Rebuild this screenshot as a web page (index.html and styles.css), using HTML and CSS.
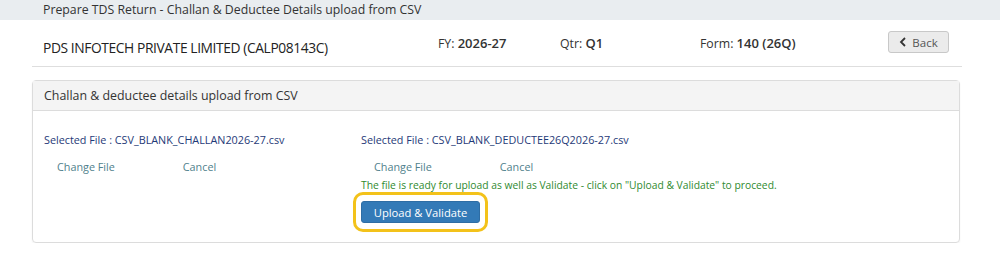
FILE: index.html
```html
<!DOCTYPE html>
<html lang="en">
<head>
  <meta charset="UTF-8">
  <title>Prepare TDS Return - CSV Upload</title>
  <link rel="stylesheet" href="styles.css">
</head>
<body>

  <div class="topbar">Prepare TDS Return - Challan &amp; Deductee Details upload from CSV</div>

  <div class="header">
    <div class="company">PDS INFOTECH PRIVATE LIMITED (CALP08143C)</div>
    <div class="fy">FY: <b>2026-27</b></div>
    <div class="qtr">Qtr: <b>Q1</b></div>
    <div class="form">Form: <b>140 (26Q)</b></div>
    <button class="back-btn">
      <svg width="8" height="10" viewBox="0 0 8 10"><path d="M6 1 L2 5 L6 9" fill="none" stroke="#333" stroke-width="1.8"/></svg>
      Back
    </button>
  </div>

  <div class="panel">
    <div class="panel-heading">Challan &amp; deductee details upload from CSV</div>
    <div class="panel-body">
      <div class="col col-challan">
        <div class="selected">Selected File : CSV_BLANK_CHALLAN2026-27.csv</div>
        <div class="links">
          <a href="#" class="change">Change File</a>
          <a href="#">Cancel</a>
        </div>
      </div>
      <div class="col col-deductee">
        <div class="selected">Selected File : CSV_BLANK_DEDUCTEE26Q2026-27.csv</div>
        <div class="links">
          <a href="#" class="change">Change File</a>
          <a href="#">Cancel</a>
        </div>
        <div class="ready">The file is ready for upload as well as Validate - click on "Upload &amp; Validate" to proceed.</div>
        <div class="highlight">
          <button class="upload-btn">Upload &amp; Validate</button>
        </div>
      </div>
    </div>
  </div>

</body>
</html>
```

FILE: styles.css
```css
body {
  font-family: "Open Sans", "Noto Sans", Arial, sans-serif;
  background-color: #fff;
  color: #333;
  margin: 0;
  padding: 0;
}

.topbar {
  height: 20px;
  line-height: 19px;
  background-color: #e9edf0;
  padding-left: 43px;
  font-size: 12.3px;
  color: #333;
}

.header {
  display: flex;
  align-items: center;
  height: 46px;
  margin: 0 38px 0 32px;
  padding-left: 11px;
  border-bottom: 1px solid #dedede;
  font-size: 12.3px;
  color: #333;
}

.header b {
  font-weight: 600;
  font-size: 13px;
}

.company {
  width: 395px;
  font-size: 13.8px;
  letter-spacing: -0.4px;
  color: #222;
  padding-top: 8px;
}

.fy {
  width: 122px;
}

.qtr {
  width: 140px;
}

.form {
  flex: 1;
}

.back-btn {
  width: 61px;
  height: 22px;
  margin-right: 13px;
  margin-top: -2px;
  border: 1px solid #c8c8c8;
  border-radius: 3px;
  background-color: #ebebeb;
  font-family: inherit;
  font-size: 11.5px;
  color: #555;
  display: flex;
  align-items: center;
  justify-content: center;
  gap: 5px;
  padding: 0;
}

.panel {
  margin: 13px 40px 0 32px;
  border: 1px solid #dcdcdc;
  border-radius: 4px;
  box-shadow: 0 1px 2px rgba(0, 0, 0, 0.05);
}

.panel-heading {
  height: 29px;
  line-height: 29px;
  padding-left: 11px;
  background-color: #f4f4f4;
  border-bottom: 1px solid #dcdcdc;
  font-size: 12.4px;
  color: #333;
}

.panel-body {
  display: flex;
  padding: 21px 11px 10px 11px;
}

.col-challan {
  width: 317px;
}

.selected {
  font-size: 10.8px;
  color: #1f3a78;
  height: 17px;
}

.links {
  margin-top: 10px;
  padding-left: 13px;
  font-size: 10.8px;
  height: 16px;
}

.links a {
  color: #4f7f8c;
  text-decoration: none;
}

.links .change {
  display: inline-block;
  width: 123px;
}

.ready {
  margin-top: 3px;
  font-size: 10.3px;
  color: #2f8a2f;
}

.highlight {
  display: inline-block;
  margin: 0 0 0 -8px;
  padding: 6px 5px;
  border: 3px solid #f3c21a;
  border-radius: 10px;
}

.upload-btn {
  display: block;
  width: 119px;
  height: 22px;
  border: 1px solid #2e6da4;
  border-radius: 3px;
  background-color: #337ab7;
  color: #fff;
  font-family: inherit;
  font-size: 11.2px;
  padding: 0;
}
```
